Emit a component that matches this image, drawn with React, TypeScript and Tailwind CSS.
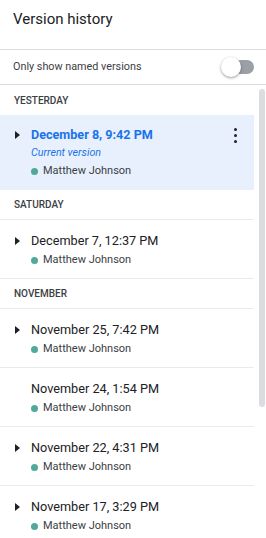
import React from "react";

type Version = {
  date: string;
  expandable: boolean;
  current?: boolean;
};

type Group = { label: string; versions: Version[] };

const groups: Group[] = [
  { label: "Yesterday", versions: [{ date: "December 8, 9:42 PM", expandable: true, current: true }] },
  { label: "Saturday", versions: [{ date: "December 7, 12:37 PM", expandable: true }] },
  {
    label: "November",
    versions: [
      { date: "November 25, 7:42 PM", expandable: true },
      { date: "November 24, 1:54 PM", expandable: false },
      { date: "November 22, 4:31 PM", expandable: true },
      { date: "November 17, 3:29 PM", expandable: true },
    ],
  },
];

function Caret() {
  return (
    <svg width="5" height="8" viewBox="0 0 5 8" className="shrink-0">
      <polygon points="0,0 5,4 0,8" fill="#202124" />
    </svg>
  );
}

function Author() {
  return (
    <div className="flex items-center gap-[5px] h-[18px] text-[11px] text-[#3c4043]">
      <span className="h-[7px] w-[7px] rounded-full bg-[#52a89a]" />
      Matthew Johnson
    </div>
  );
}

function VersionRow({ v }: { v: Version }) {
  if (v.current) {
    return (
      <div className="relative flex bg-[#e8f0fe] pt-[10px] pb-[10px] pl-[15px]">
        <div className="w-[16px] h-[20px] flex items-center">
          <Caret />
        </div>
        <div className="flex-1">
          <div className="h-[20px] flex items-center text-[12.6px] font-bold text-[#1a73e8]">{v.date}</div>
          <div className="h-[17px] flex items-center text-[10.7px] italic text-[#1a73e8]">Current version</div>
          <Author />
        </div>
        <div className="absolute right-[17px] top-[13px] flex flex-col gap-[3px]">
          <span className="h-[3px] w-[3px] rounded-full bg-[#202124]" />
          <span className="h-[3px] w-[3px] rounded-full bg-[#202124]" />
          <span className="h-[3px] w-[3px] rounded-full bg-[#202124]" />
        </div>
      </div>
    );
  }
  return (
    <div className="flex pt-[11px] pb-[9px] pl-[15px] border-b border-[#e8eaed]">
      <div className="w-[16px] h-[20px] flex items-center">{v.expandable && <Caret />}</div>
      <div className="flex-1">
        <div className="h-[20px] flex items-center text-[12.7px] text-[#202124]">{v.date}</div>
        <Author />
      </div>
    </div>
  );
}

export default function App() {
  return (
    <div
      className="w-[266px] h-[538px] overflow-hidden bg-white flex flex-col"
      style={{ fontFamily: "Roboto, 'Liberation Sans', sans-serif" }}
    >
      <div className="h-[50px] shrink-0 pt-[8px] px-[13px] border-b border-[#dadce0]">
        <h1 className="text-[15px] leading-[23px] text-[#202124]">Version history</h1>
      </div>
      <div className="h-[35px] shrink-0 flex items-center justify-between pl-[13px] pr-[12px] border-b border-[#dadce0]">
        <span className="text-[10.8px] text-[#3c4043]">Only show named versions</span>
        <div className="relative w-[33px] h-[20px] flex items-center">
          <div className="absolute right-0 w-[20px] h-[14px] rounded-full bg-[#9aa0a6]" />
          <div className="absolute left-0 h-[20px] w-[20px] rounded-full bg-white shadow-[0_1px_3px_rgba(0,0,0,0.4)]" />
        </div>
      </div>
      <div className="flex flex-1 min-h-0">
        <div className="w-[254px] shrink-0">
          {groups.map((g) => (
            <div key={g.label}>
              <div
                className={`h-[30px] flex items-center px-[14px] text-[10px] font-medium uppercase text-[#3c4043] ${
                  g.label === "Yesterday" ? "" : "border-b border-[#e8eaed]"
                }`}
              >
                {g.label}
              </div>
              {g.versions.map((v) => (
                <VersionRow key={v.date} v={v} />
              ))}
            </div>
          ))}
        </div>
        <div className="flex-1 pt-[4px] pl-[5px]">
          <div className="w-[6px] h-[318px] rounded-full bg-[#dadce0]" />
        </div>
      </div>
    </div>
  );
}
